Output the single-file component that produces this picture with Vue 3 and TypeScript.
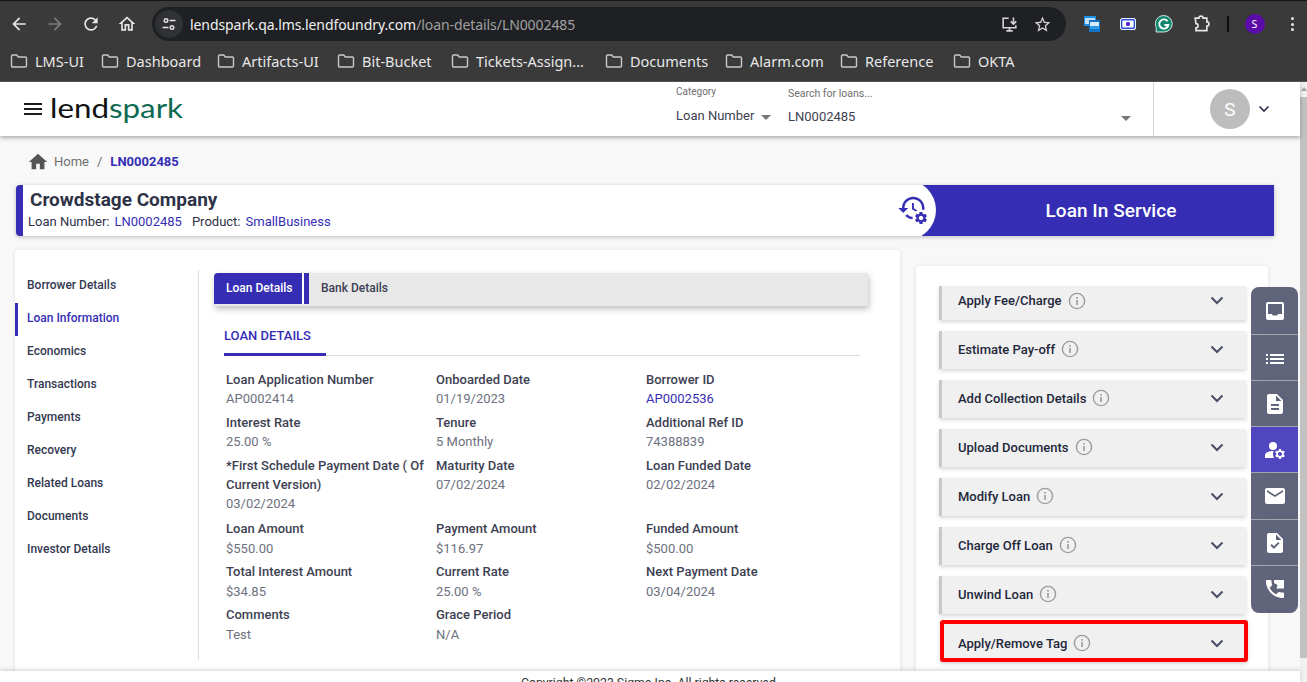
<script setup lang="ts">
const P = {
  back: 'M20 11H7.83l5.59-5.59L12 4l-8 8 8 8 1.41-1.41L7.83 13H20v-2z',
  forward: 'M12 4l-1.41 1.41L16.17 11H4v2h12.17l-5.58 5.59L12 20l8-8z',
  refresh: 'M17.65 6.35A7.958 7.958 0 0 0 12 4c-4.42 0-7.99 3.58-7.99 8s3.57 8 7.99 8c3.73 0 6.84-2.55 7.73-6h-2.08A5.99 5.99 0 0 1 12 18c-3.31 0-6-2.69-6-6s2.69-6 6-6c1.66 0 3.14.69 4.22 1.78L13 11h7V4l-2.35 2.35z',
  homeOutline: 'M12 5.69l5 4.5V18h-2v-6H9v6H7v-7.81l5-4.5M12 3L2 12h3v8h6v-6h2v6h6v-8h3L12 3z',
  star: 'M22 9.24l-7.19-.62L12 2 9.19 8.63 2 9.24l5.46 4.73L5.82 21 12 17.27 18.18 21l-1.63-7.03L22 9.24zM12 15.4l-3.76 2.27 1-4.28-3.32-2.88 4.38-.38L12 6.1l1.71 4.04 4.38.38-3.32 2.88 1 4.28L12 15.4z',
  home: 'M10 20v-6h4v6h5v-8h3L12 3 2 12h3v8z',
  history: 'M13 3c-4.97 0-9 4.03-9 9H1l3.89 3.89.07.14L9 12H6c0-3.87 3.13-7 7-7s7 3.13 7 7-3.13 7-7 7c-1.93 0-3.68-.79-4.94-2.06l-1.42 1.42C8.27 19.99 10.51 21 13 21c4.97 0 9-4.03 9-9s-4.03-9-9-9zm-1 5v5l4.28 2.54.72-1.21-3.5-2.08V8H12z',
  gear: 'M19.14 12.94c.04-.3.06-.61.06-.94 0-.32-.02-.64-.07-.94l2.03-1.58a.49.49 0 0 0 .12-.61l-1.92-3.32a.488.488 0 0 0-.59-.22l-2.39.96c-.5-.38-1.03-.7-1.62-.94l-.36-2.54a.484.484 0 0 0-.48-.41h-3.84c-.24 0-.43.17-.47.41l-.36 2.54c-.59.24-1.13.57-1.62.94l-2.39-.96c-.22-.08-.47 0-.59.22L2.74 8.87c-.12.21-.08.47.12.61l2.03 1.58c-.05.3-.09.63-.09.94s.02.64.07.94l-2.03 1.58a.49.49 0 0 0-.12.61l1.92 3.32c.12.22.37.29.59.22l2.39-.96c.5.38 1.03.7 1.62.94l.36 2.54c.05.24.24.41.48.41h3.84c.24 0 .44-.17.47-.41l.36-2.54c.59-.24 1.13-.56 1.62-.94l2.39.96c.22.08.47 0 .59-.22l1.92-3.32c.12-.22.07-.47-.12-.61l-2.01-1.58zM12 15.6c-1.98 0-3.6-1.62-3.6-3.6s1.62-3.6 3.6-3.6 3.6 1.62 3.6 3.6-1.62 3.6-3.6 3.6z',
}

const bookmarks = [
  { name: 'LMS-UI', w: 91 },
  { name: 'Dashboard', w: 116 },
  { name: 'Artifacts-UI', w: 120 },
  { name: 'Bit-Bucket', w: 114 },
  { name: 'Tickets-Assign...', w: 154 },
  { name: 'Documents', w: 120 },
  { name: 'Alarm.com', w: 115 },
  { name: 'Reference', w: 113 },
  { name: 'OKTA', w: 80 },
]

const navItems = ['Borrower Details', 'Loan Information', 'Economics', 'Transactions', 'Payments', 'Recovery', 'Related Loans', 'Documents', 'Investor Details']

const fields = [
  { label: 'Loan Application Number', value: 'AP0002414' },
  { label: 'Onboarded Date', value: '01/19/2023' },
  { label: 'Borrower ID', value: 'AP0002536', link: true },
  { label: 'Interest Rate', value: '25.00 %' },
  { label: 'Tenure', value: '5 Monthly' },
  { label: 'Additional Ref ID', value: '74388839' },
  { label: '*First Schedule Payment Date ( Of Current Version)', value: '03/02/2024' },
  { label: 'Maturity Date', value: '07/02/2024' },
  { label: 'Loan Funded Date', value: '02/02/2024' },
  { label: 'Loan Amount', value: '$550.00' },
  { label: 'Payment Amount', value: '$116.97' },
  { label: 'Funded Amount', value: '$500.00' },
  { label: 'Total Interest Amount', value: '$34.85' },
  { label: 'Current Rate', value: '25.00 %' },
  { label: 'Next Payment Date', value: '03/04/2024' },
  { label: 'Comments', value: 'Test' },
  { label: 'Grace Period', value: 'N/A' },
]

const actions = ['Apply Fee/Charge', 'Estimate Pay-off', 'Add Collection Details', 'Upload Documents', 'Modify Loan', 'Charge Off Loan', 'Unwind Loan', 'Apply/Remove Tag']

const tools = [
  { d: 'M19 3H5c-1.1 0-2 .9-2 2v14c0 1.1.9 2 2 2h14c1.1 0 2-.9 2-2V5c0-1.1-.9-2-2-2zm0 12h-4c0 1.66-1.35 1.5-3 1.5S9 16.66 9 15H5V5h14v10z', active: false },
  { d: 'M3 14h2v-2H3v2zm0 4h2v-2H3v2zm0-8h2V8H3v2zm4 4h14v-2H7v2zm0 4h14v-2H7v2zM7 8v2h14V8H7z', active: false },
  { d: 'M14 2H6c-1.1 0-1.99.9-1.99 2L4 20c0 1.1.89 2 1.99 2H18c1.1 0 2-.9 2-2V8l-6-6zm2 16H8v-2h8v2zm0-4H8v-2h8v2zm-3-5V3.5L18.5 9H13z', active: false },
  { d: 'M14 8a4 4 0 1 1-8 0 4 4 0 0 1 8 0zM10.67 13.02C10.45 13.01 10.23 13 10 13c-2.42 0-4.68.67-6.61 1.82-.88.52-1.39 1.5-1.39 2.53V20h9.26c-.79-1.13-1.26-2.51-1.26-4 0-1.07.25-2.07.67-2.98zM20.75 16c0-.22-.03-.42-.06-.63l1.14-1.01-1-1.73-1.45.49c-.32-.27-.68-.48-1.08-.63L18 11h-2l-.3 1.49c-.4.15-.76.36-1.08.63l-1.45-.49-1 1.73 1.14 1.01c-.03.21-.06.41-.06.63s.03.42.06.63l-1.14 1.01 1 1.73 1.45-.49c.32.27.68.48 1.08.63L16 21h2l.3-1.49c.4-.15.76-.36 1.08-.63l1.45.49 1-1.73-1.14-1.01c.03-.21.06-.41.06-.63zM17 18c-1.1 0-2-.9-2-2s.9-2 2-2 2 .9 2 2-.9 2-2 2z', active: true },
  { d: 'M20 4H4c-1.1 0-1.99.9-1.99 2L2 18c0 1.1.9 2 2 2h16c1.1 0 2-.9 2-2V6c0-1.1-.9-2-2-2zm0 4l-8 5-8-5V6l8 5 8-5v2z', active: false },
  { d: 'M14 2H6c-1.1 0-1.99.9-1.99 2L4 20c0 1.1.89 2 1.99 2H18c1.1 0 2-.9 2-2V8l-6-6zm-3.06 16L7.4 14.46l1.41-1.41 2.12 2.12 4.24-4.24 1.41 1.41L10.94 18zM13 9V3.5L18.5 9H13z', active: false },
  { d: 'M3 3c0-.55.45-1 1-1h3.5c.55 0 1 .45 1 1 0 1.25.2 2.45.57 3.57.11.35.03.74-.25 1.01l-2.2 2.21c1.44 2.83 3.76 5.14 6.59 6.58l2.2-2.2c.28-.27.67-.35 1.02-.24 1.12.37 2.32.57 3.57.57.55 0 1 .45 1 1V19c0 .55-.45 1-1 1C10.61 20 3 12.39 3 3zM11 2h10v8.5h-7.5l1-3.5-3.5-2z', active: false },
]
</script>

<template>
  <div class="window">
    <div class="browser">
      <div class="toolbar">
        <svg class="tb-icon" viewBox="0 0 24 24"><path :d="P.back" /></svg>
        <svg class="tb-icon dim" viewBox="0 0 24 24"><path :d="P.forward" /></svg>
        <svg class="tb-icon" viewBox="0 0 24 24"><path :d="P.refresh" /></svg>
        <svg class="tb-icon" viewBox="0 0 24 24"><path :d="P.homeOutline" /></svg>
        <div class="omnibox">
          <span class="site-info">
            <svg width="16" height="16" viewBox="0 0 16 16" fill="none" stroke="#e3e3e3" stroke-width="1.4">
              <circle cx="5" cy="4.5" r="1.8" /><path d="M8.5 4.5H14.5M1.5 11.5H7.5" /><circle cx="11" cy="11.5" r="1.8" />
            </svg>
          </span>
          <span class="url"><b>lendspark.qa.lms.lendfoundry.com</b>/loan-details/LN0002485</span>
          <svg class="om-icon first" viewBox="0 0 24 24" fill="none" stroke="#d5d5d5" stroke-width="2">
            <path d="M11 4H4v12h16v-3M8 20h8M12 16v4" /><path d="M17 3v8M13.5 8l3.5 3.5L20.5 8" />
          </svg>
          <svg class="om-icon star" viewBox="0 0 24 24"><path :d="P.star" fill="#d5d5d5" /></svg>
        </div>
        <div class="extensions">
          <svg class="ext" viewBox="0 0 18 18">
            <rect x="1" y="1" width="12" height="10" fill="#1c8fe6" /><rect x="2" y="3" width="10" height="6" fill="#bfe0f8" />
            <rect x="6" y="5" width="11" height="12" fill="#1273c4" /><rect x="7" y="7" width="9" height="4" fill="#d5e9f8" /><rect x="7" y="11" width="9" height="3" fill="#2f9be8" />
          </svg>
          <svg class="ext" viewBox="0 0 18 18">
            <rect x="1" y="3" width="16" height="12" rx="2.5" fill="#eef1ff" /><rect x="2.7" y="4.7" width="12.6" height="8.6" rx="1" fill="#fff" stroke="#2d4fe0" stroke-width="1.4" /><circle cx="9" cy="9" r="2.2" fill="#5a2cd0" />
          </svg>
          <svg class="ext" viewBox="0 0 18 18">
            <path d="M9 .6a8.2 8.2 0 1 1 0 16.4H1.2v-4.6A8.2 8.2 0 0 1 9 .6z" fill="#11856e" stroke="#e8f4f1" stroke-width=".9" />
            <path d="M12.6 6.3A4.6 4.6 0 1 0 13.4 10H9.4" fill="none" stroke="#fff" stroke-width="1.8" />
          </svg>
          <svg class="ext puzzle" viewBox="0 0 24 24" fill="none" stroke="#e6e6e6" stroke-width="2">
            <path d="M5 5h4.5a2.5 2.5 0 0 1 5 0H19v4.5a2.5 2.5 0 0 1 0 5V20H6v-3.5a2.5 2.5 0 0 0 0-5z" />
          </svg>
          <span class="sep"></span>
          <span class="profile">S</span>
          <span class="kebab"><i></i><i></i><i></i></span>
        </div>
      </div>
      <div class="bookmarks">
        <div v-for="b in bookmarks" :key="b.name" class="bookmark" :style="{ width: b.w + 'px' }">
          <svg width="18" height="16" viewBox="0 0 18 16" fill="none" stroke="#c9c9c9" stroke-width="1.4">
            <path d="M1.5 3.2c0-.7.5-1.2 1.2-1.2h4l1.6 2h7c.7 0 1.2.5 1.2 1.2v7.6c0 .7-.5 1.2-1.2 1.2H2.7c-.7 0-1.2-.5-1.2-1.2z" />
          </svg>
          <span>{{ b.name }}</span>
        </div>
      </div>
    </div>

    <div class="viewport">
      <div class="page">
        <header class="app-header">
          <div class="burger"><i></i><i></i><i></i></div>
          <div class="logo"><span class="lend">lend</span><span class="spark">spark</span></div>
          <div class="search">
            <div class="category">
              <div class="small-label">Category</div>
              <div class="select-line">Loan Number<span class="caret"></span></div>
            </div>
            <div class="loan-search">
              <div class="small-label">Search for loans...</div>
              <div class="select-line wide">LN0002485<span class="caret"></span></div>
            </div>
          </div>
          <div class="user">
            <span class="avatar">S</span>
            <svg width="12" height="8" viewBox="0 0 12 8" fill="none" stroke="#2f3350" stroke-width="1.7"><path d="M1.5 1.5L6 6l4.5-4.5" /></svg>
          </div>
        </header>

        <main class="main">
          <nav class="crumbs">
            <svg class="crumb-home" viewBox="0 0 24 24"><path :d="P.home" /></svg>
            <span>Home</span><span class="slash">/</span><b>LN0002485</b>
          </nav>

          <section class="banner">
            <div class="banner-info">
              <h1>Crowdstage Company</h1>
              <p>Loan Number:<a>LN0002485</a><span class="product">Product:</span><a>SmallBusiness</a></p>
            </div>
            <div class="status">Loan In Service</div>
            <div class="status-badge">
              <svg width="34" height="34" viewBox="0 0 34 34" fill="#352eb5">
                <svg x="0" y="0" width="30" height="30" viewBox="0 0 24 24"><path :d="P.history" /></svg>
                <circle cx="24" cy="25" r="8.5" fill="#fff" />
                <svg x="16.5" y="17.5" width="15" height="15" viewBox="0 0 24 24"><path :d="P.gear" /></svg>
              </svg>
            </div>
          </section>

          <div class="columns">
            <section class="card details">
              <ul class="side-nav">
                <li v-for="(n, i) in navItems" :key="n" :class="{ on: i === 1 }">{{ n }}</li>
              </ul>
              <div class="detail-body">
                <div class="tabs">
                  <span class="tab on">Loan Details</span>
                  <span class="tab">Bank Details</span>
                </div>
                <div class="section-title"><span>LOAN DETAILS</span></div>
                <div class="grid">
                  <div v-for="(f, i) in fields" :key="f.label" class="field" :class="{ long: i === 6, low: i >= 9 }">
                    <div class="f-label">{{ f.label }}</div>
                    <div class="f-value" :class="{ link: f.link }">{{ f.value }}</div>
                  </div>
                </div>
              </div>
            </section>

            <section class="card actions">
              <div v-for="(a, i) in actions" :key="a" class="action" :class="{ first: i === 0, marked: i === 7 }">
                <span>{{ a }}</span>
                <svg class="info" width="18" height="18" viewBox="0 0 18 18" fill="none">
                  <circle cx="9" cy="9" r="7.6" stroke="#9b9b9b" stroke-width="1.4" />
                  <rect x="8.2" y="8" width="1.6" height="5" fill="#9b9b9b" /><rect x="8.2" y="5" width="1.6" height="1.7" fill="#9b9b9b" />
                </svg>
                <svg class="chev" width="14" height="9" viewBox="0 0 14 9" fill="none" stroke="#4a4e66" stroke-width="2"><path d="M1.5 1.5L7 7l5.5-5.5" /></svg>
              </div>
            </section>
          </div>
        </main>

        <footer class="footer">Copyright ©2023 Sigma Inc. All rights reserved.</footer>
      </div>

      <div class="scrollbar"><span class="arrow"></span><span class="thumb"></span></div>

      <aside class="float-tools">
        <div v-for="(t, i) in tools" :key="i" class="tool" :class="{ on: t.active }">
          <svg width="24" height="24" viewBox="0 0 24 24"><path :d="t.d" fill="#fff" fill-rule="evenodd" /></svg>
        </div>
      </aside>
    </div>
  </div>
</template>

<style>
html, body { margin: 0; overflow: hidden; }
</style>

<style scoped>
.window { width: 1307px; height: 682px; display: flex; flex-direction: column; overflow: hidden; font-family: Roboto, "Liberation Sans", sans-serif; background: #fff; }
.browser { height: 82px; flex: none; background: #3a3a3a; box-sizing: border-box; border-top: 1px solid #151515; border-bottom: 1px solid #555; display: flex; flex-direction: column; }
.toolbar { height: 40px; display: flex; align-items: center; padding: 6px 0 0 9px; box-sizing: border-box; }
.tb-icon { width: 20px; height: 20px; fill: #e6e6e6; margin-right: 16px; flex: none; }
.tb-icon.dim { fill: #7c7c7c; }
.omnibox { width: 914px; height: 34px; margin-left: -1px; border-radius: 17px; background: #1f2023; display: flex; align-items: center; box-sizing: border-box; padding-left: 3px; flex: none; }
.site-info { width: 28px; height: 28px; border-radius: 50%; background: #303134; display: flex; align-items: center; justify-content: center; flex: none; }
.url { margin-left: 7px; font: 14px "Noto Sans", sans-serif; letter-spacing: -.08px; color: #a0a0a0; white-space: nowrap; flex: 1; }
.url b { font-weight: 400; color: #f0f0f0; }
.om-icon { width: 19px; height: 19px; flex: none; }
.om-icon.star { margin: 0 14px 0 14px; }
.extensions { display: flex; align-items: center; margin-left: 17px; flex: 1; }
.ext { width: 18px; height: 18px; margin-right: 18px; flex: none; }
.ext.puzzle { width: 20px; height: 20px; margin-right: 16px; }
.sep { width: 1.5px; height: 16px; background: #0c0c0c; margin-right: 16px; }
.profile { width: 20px; height: 20px; border-radius: 50%; background: #5b0ba8; color: #fff; font: 10.5px "Noto Sans", sans-serif; display: flex; align-items: center; justify-content: center; }
.kebab { margin-left: 26px; display: flex; flex-direction: column; gap: 2.5px; }
.kebab i { width: 3px; height: 3px; border-radius: 50%; background: #e6e6e6; display: block; }
.bookmarks { height: 40px; display: flex; align-items: center; padding-left: 10px; box-sizing: border-box; }
.bookmark { display: flex; align-items: center; gap: 7px; flex: none; color: #e8e8e8; font: 14.5px "Noto Sans", sans-serif; white-space: nowrap; margin-top: -1px; }

.viewport { flex: 1; min-height: 0; display: flex; position: relative; }
.page { flex: 1; min-width: 0; display: flex; flex-direction: column; }
.scrollbar { width: 7px; flex: none; background: #f1f1f1; display: flex; flex-direction: column; align-items: center; }
.arrow { margin-top: 5px; border: 3px solid transparent; border-top: 0; border-bottom: 4px solid #a3a3a3; }
.thumb { margin-top: 6px; width: 100%; height: 561px; background: #c1c1c1; }

.app-header { height: 54px; flex: none; background: #fff; display: flex; align-items: center; box-shadow: 0 2px 4px rgba(0,0,0,.3); position: relative; z-index: 2; padding-left: 24px; }
.burger { display: flex; flex-direction: column; gap: 3px; width: 18px; margin-right: 8px; }
.burger i { height: 2px; background: #1c1c1c; display: block; }
.logo { font: 400 27px/1 Lato, sans-serif; margin-top: -3px; transform: scaleX(1.16); transform-origin: left center; white-space: nowrap; }
.lend { color: #111; }
.spark { color: #0c6a50; }
.search { display: flex; margin-left: auto; align-self: stretch; color: #3e4252; }
.category { width: 112px; padding-top: 4px; }
.loan-search { width: 365px; padding-top: 6px; }
.small-label { font-size: 10.5px; line-height: 12px; color: #6e6e6e; }
.category .small-label { font-size: 10px; }
.select-line { font-size: 13px; line-height: 16px; display: flex; align-items: center; }
.category .select-line { margin-top: 10px; }
.select-line.wide { margin-top: 9px; justify-content: space-between; width: 343px; }
.caret { margin-left: 7px; border: 5px solid transparent; border-bottom: 0; border-top: 5px solid #777; margin-top: 3px; }
.user { width: 147px; align-self: stretch; box-sizing: border-box; border-left: 1px solid #d6d6d6; display: flex; align-items: center; padding-left: 56px; gap: 8px; }
.avatar { width: 40px; height: 40px; border-radius: 50%; background: #bdbdbd; color: #fff; font-size: 19px; display: flex; align-items: center; justify-content: center; }

.main { flex: 1; min-height: 0; overflow: hidden; background: #f8f8f8; }
.crumbs { height: 49px; box-sizing: border-box; padding: 18px 0 0 28px; display: flex; align-items: flex-start; font-size: 13px; line-height: 16px; color: #6f6f6f; }
.crumb-home { width: 22px; height: 22px; fill: #555; margin: -3px 5px 0 -1px; }
.slash { margin: 0 8px; }
.crumbs b { color: #352eb5; font-weight: 700; }
.banner { height: 51px; margin: 0 26px 0 16px; display: flex; position: relative; overflow: hidden; background: #fff; border-left: 7px solid #352eb5; border-radius: 4px 0 0 4px; box-shadow: 0 1px 4px rgba(0,0,0,.25); }
.banner-info { flex: 1; min-width: 0; padding-left: 5px; color: #2e3247; }
.banner-info h1 { margin: 3px 0 0 2px; font-size: 19px; line-height: 24px; font-weight: 700; color: #2e3247; }
.banner-info p { margin: 1px 0 0; font-size: 13px; line-height: 18px; display: flex; }
.banner-info a { color: #352eb5; margin-left: 5px; }
.product { margin-left: 10px; }
.status { width: 326px; flex: none; padding-left: 26px; background: #352eb5; color: #fff; font-size: 19px; font-weight: 500; letter-spacing: .05px; display: flex; align-items: center; justify-content: center; }
.status-badge { position: absolute; left: 853px; top: -5px; width: 60px; height: 60px; box-sizing: border-box; border-radius: 50%; background: #fff; display: flex; align-items: center; justify-content: center; padding-left: 16px; }

.columns { display: flex; align-items: flex-start; gap: 16px; margin: 14px 0 0 15px; }
.card { background: #fff; border-radius: 4px; box-shadow: 0 0 4px rgba(0,0,0,.1); }
.details { width: 885px; height: 440px; box-sizing: border-box; display: flex; flex: none; padding-top: 20px; }
.side-nav { list-style: none; margin: 0; padding: 0; width: 183px; height: 390px; border-right: 1px solid #ddd; flex: none; }
.side-nav li { height: 33px; box-sizing: border-box; font-size: 12px; font-weight: 500; line-height: 31px; color: #333950; border-left: 3px solid transparent; padding-left: 9px; }
.side-nav li.on { color: #352eb5; border-left-color: #352eb5; }
.detail-body { flex: 1; min-width: 0; padding: 3px 0 0 15px; }
.tabs { width: 654px; height: 33px; display: flex; background: #e8e8e8; border-radius: 4px 0 0 0; box-shadow: 1px 3px 6px rgba(0,0,0,.25); }
.tab { font-size: 12px; font-weight: 500; line-height: 30px; color: #3c4054; padding: 0 12px; height: 31px; white-space: nowrap; }
.tab.on { background: #352eb5; color: #fff; border-radius: 4px 0 0 0; box-shadow: 2px 0 0 #fff, 7px 0 0 #352eb5; width: 88px; box-sizing: border-box; margin-right: 7px; }
.section-title { width: 636px; margin: 15px 0 0 10px; border-bottom: 1px solid #ddd; height: 35px; box-sizing: border-box; }
.section-title span { display: inline-block; height: 35px; line-height: 30px; width: 102px; box-sizing: border-box; border-bottom: 3px solid #352eb5; color: #352eb5; font-size: 13px; font-weight: 500; }
.grid { display: grid; grid-template-columns: repeat(3, 210px); margin: 14px 0 0 12px; align-items: start; }
.field { padding-bottom: 5px; font-size: 13px; line-height: 19px; padding-right: 6px; }
.field.long { padding-bottom: 6px; }
.field.low { padding-bottom: 4px; }
.low .f-value { margin-top: 1px; }
.f-label { font-weight: 500; color: #3d4152; }
.f-value { color: #6d7180; }
.f-value.link { color: #352eb5; }

.actions { width: 352px; height: 420px; flex: none; margin-top: 16px; padding: 20px 0 0 23px; box-sizing: border-box; display: flex; flex-direction: column; gap: 11px; }
.action { width: 307px; height: 38px; flex: none; box-sizing: border-box; padding: 0 22px 2px 16px; background: #f0f0f0; border-left: 3px solid #c8c8c8; box-shadow: 0 2px 4px rgba(0,0,0,.16); display: flex; align-items: center; font-size: 13px; font-weight: 500; color: #23273a; }
.action.first { height: 34px; padding-bottom: 5px; }
.action.marked { width: 308px; height: 42px; margin: -5px 0 0 1px; padding: 4px 20px 0 14px; border: 4px solid #f00; border-radius: 3px; }
.info { margin-left: 6px; }
.chev { margin-left: auto; }
.footer { height: 11px; flex: none; background: #fff; text-align: center; font-size: 12.3px; line-height: 25px; overflow: hidden; color: #333; position: relative; z-index: 2; box-shadow: 0 -1px 4px rgba(0,0,0,.18); }

.float-tools { position: absolute; left: 1251px; top: 205px; width: 47px; background: rgba(74, 78, 104, .87); border-radius: 8px; overflow: hidden; z-index: 3; }
.tool { height: 45px; border-bottom: 1px solid #a4a5ae; display: flex; align-items: center; justify-content: center; }
.tool:first-child { height: 47px; }
.tool:nth-child(5) { height: 46px; }
.tool:last-child { border-bottom: 0; height: 47px; }
.tool.on { background: #4f46c0; }
</style>
